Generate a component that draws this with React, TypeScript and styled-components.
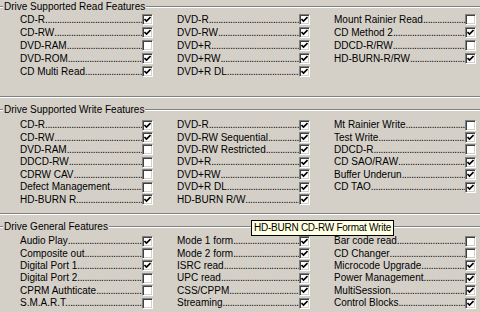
import React from 'react';
import styled, { createGlobalStyle } from 'styled-components';

const GlobalStyle = createGlobalStyle`
  html, body {
    margin: 0;
    padding: 0;
    background: #d4d0c8;
  }
`;

type Feature = { label: string; on: boolean };

const READ: Feature[][] = [
  [
    { label: 'CD-R', on: true },
    { label: 'CD-RW', on: true },
    { label: 'DVD-RAM', on: false },
    { label: 'DVD-ROM', on: true },
    { label: 'CD Multi Read', on: true },
  ],
  [
    { label: 'DVD-R', on: true },
    { label: 'DVD-RW', on: true },
    { label: 'DVD+R', on: true },
    { label: 'DVD+RW', on: true },
    { label: 'DVD+R DL', on: true },
  ],
  [
    { label: 'Mount Rainier Read', on: false },
    { label: 'CD Method 2', on: true },
    { label: 'DDCD-R/RW', on: false },
    { label: 'HD-BURN-R/RW', on: true },
  ],
];

const WRITE: Feature[][] = [
  [
    { label: 'CD-R', on: true },
    { label: 'CD-RW', on: true },
    { label: 'DVD-RAM', on: false },
    { label: 'DDCD-RW', on: false },
    { label: 'CDRW CAV', on: false },
    { label: 'Defect Management', on: false },
    { label: 'HD-BURN R', on: true },
  ],
  [
    { label: 'DVD-R', on: true },
    { label: 'DVD-RW Sequential', on: true },
    { label: 'DVD-RW Restricted', on: true },
    { label: 'DVD+R', on: true },
    { label: 'DVD+RW', on: true },
    { label: 'DVD+R DL', on: true },
    { label: 'HD-BURN R/W', on: true },
  ],
  [
    { label: 'Mt Rainier Write', on: false },
    { label: 'Test Write', on: true },
    { label: 'DDCD-R', on: false },
    { label: 'CD SAO/RAW', on: true },
    { label: 'Buffer Underun', on: true },
    { label: 'CD TAO', on: true },
  ],
];

const GENERAL: Feature[][] = [
  [
    { label: 'Audio Play', on: true },
    { label: 'Composite out', on: false },
    { label: 'Digital Port 1', on: true },
    { label: 'Digital Port 2', on: false },
    { label: 'CPRM Authticate', on: false },
    { label: 'S.M.A.R.T.', on: false },
  ],
  [
    { label: 'Mode 1 form', on: true },
    { label: 'Mode 2 form', on: true },
    { label: 'ISRC read', on: true },
    { label: 'UPC read', on: true },
    { label: 'CSS/CPPM', on: true },
    { label: 'Streaming', on: true },
  ],
  [
    { label: 'Bar code read', on: false },
    { label: 'CD Changer', on: false },
    { label: 'Microcode Upgrade', on: true },
    { label: 'Power Management', on: true },
    { label: 'MultiSession', on: true },
    { label: 'Control Blocks', on: true },
  ],
];

const DOTS = '.'.repeat(70);

const Page = styled.div`
  position: relative;
  width: 480px;
  height: 312px;
  overflow: hidden;
  padding-top: 1px;
  box-sizing: border-box;
  background: #d4d0c8;
  font-family: 'Liberation Sans', Arial, sans-serif;
  font-size: 10px;
  color: #000;
`;

const Group = styled.section<{ $gap: number }>`
  margin-bottom: ${(p) => p.$gap}px;
`;

const Header = styled.div`
  display: flex;
  align-items: center;
  height: 12px;
`;

const Etch = styled.div<{ $width?: number }>`
  flex: ${(p) => (p.$width ? `0 0 ${p.$width}px` : '1')};
  height: 0;
  border-top: 1px solid #808080;
  border-bottom: 1px solid #fff;
`;

const Title = styled.span`
  padding: 0 1px;
  white-space: nowrap;
  line-height: 12px;
`;

const Body = styled.div<{ $height: number; $top: number }>`
  display: grid;
  grid-template-columns: 133px 133px 142px;
  column-gap: 24px;
  align-items: start;
  box-sizing: border-box;
  height: ${(p) => p.$height}px;
  padding: ${(p) => p.$top}px 0 0 20px;
  border-bottom: 1px solid #808080;
  box-shadow: 0 1px 0 #fff;
`;

const Column = styled.div`
  display: flex;
  flex-direction: column;
`;

const Row = styled.div<{ $pitch: number }>`
  display: flex;
  align-items: center;
  height: ${(p) => p.$pitch}px;
  line-height: 12px;
`;

const Label = styled.span`
  white-space: nowrap;
`;

const Leader = styled.span`
  flex: 1;
  min-width: 0;
  overflow: hidden;
  white-space: nowrap;
  letter-spacing: -0.4px;
`;

const Box = styled.span`
  flex: 0 0 auto;
  box-sizing: border-box;
  width: 11px;
  height: 11px;
  background: #fff;
  border-top: 1px solid #808080;
  border-left: 1px solid #808080;
  border-right: 1px solid #fff;
  border-bottom: 1px solid #fff;
  box-shadow: inset 1px 1px 0 #404040, inset -1px -1px 0 #d4d0c8;
  display: flex;
  align-items: center;
  justify-content: center;
`;

const Tooltip = styled.div`
  position: absolute;
  left: 251px;
  top: 220px;
  height: 16px;
  padding: 0 2px;
  box-sizing: border-box;
  background: #ffffe1;
  border: 1px solid #000;
  letter-spacing: -0.25px;
  line-height: 14px;
  white-space: nowrap;
`;

const Check: React.FC = () => (
  <svg width="7" height="7" viewBox="0 0 7 7">
    <path d="M0.5 3 L2.5 5 L6.5 1" fill="none" stroke="#000" strokeWidth="1.6" />
  </svg>
);

const FeatureRow: React.FC<Feature & { pitch: number }> = ({ label, on, pitch }) => (
  <Row $pitch={pitch}>
    <Label>{label}</Label>
    <Leader>{DOTS}</Leader>
    <Box>{on && <Check />}</Box>
  </Row>
);

type GroupProps = {
  title: string;
  columns: Feature[][];
  height: number;
  top: number;
  pitch: number;
  gap: number;
};

const FeatureGroup: React.FC<GroupProps> = ({ title, columns, height, top, pitch, gap }) => (
  <Group $gap={gap}>
    <Header>
      <Etch $width={3} />
      <Title>{title}</Title>
      <Etch />
    </Header>
    <Body $height={height} $top={top}>
      {columns.map((col, i) => (
        <Column key={i}>
          {col.map((f) => (
            <FeatureRow key={f.label} pitch={pitch} {...f} />
          ))}
        </Column>
      ))}
    </Body>
  </Group>
);

const App: React.FC = () => (
  <>
    <GlobalStyle />
    <Page>
      <FeatureGroup
        title="Drive Supported Read Features"
        columns={READ}
        height={84}
        top={0}
        pitch={13}
        gap={7}
      />
      <FeatureGroup
        title="Drive Supported Write Features"
        columns={WRITE}
        height={98}
        top={3}
        pitch={12.4}
        gap={7}
      />
      <FeatureGroup
        title="Drive General Features"
        columns={GENERAL}
        height={90}
        top={2}
        pitch={12.4}
        gap={0}
      />
      <Tooltip>HD-BURN CD-RW Format Write</Tooltip>
    </Page>
  </>
);

export default App;
